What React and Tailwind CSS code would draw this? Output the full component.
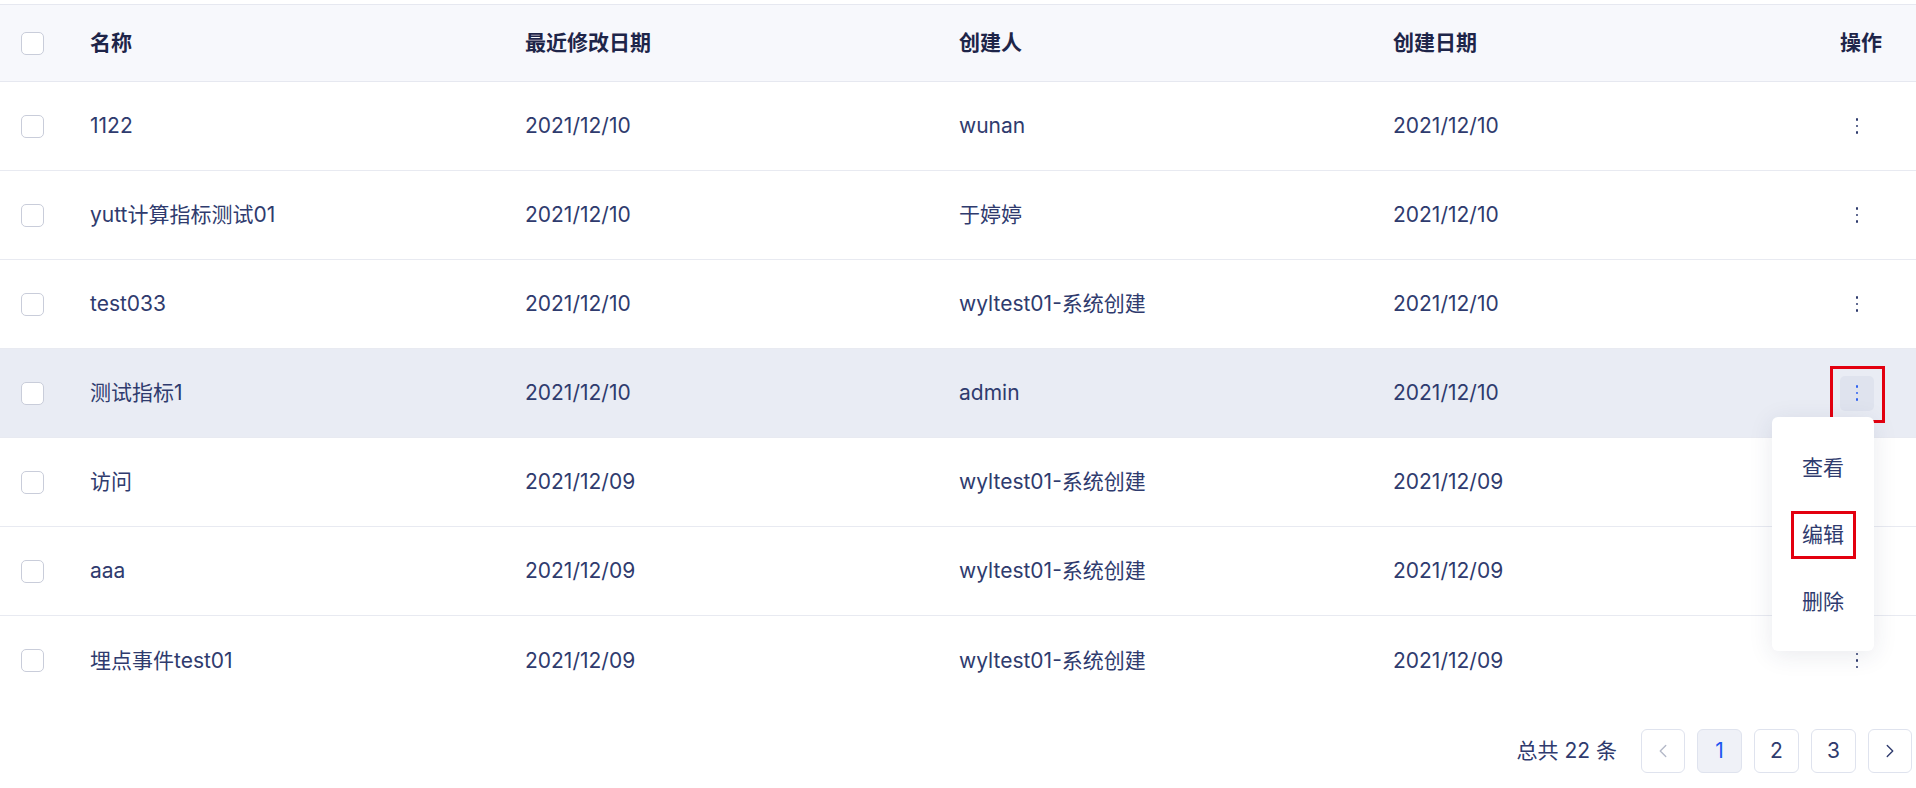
import { ChevronLeft, ChevronRight } from "lucide-react";

const rows = [
  { name: "1122", modified: "2021/12/10", creator: "wunan", created: "2021/12/10" },
  { name: "yutt计算指标测试01", modified: "2021/12/10", creator: "于婷婷", created: "2021/12/10" },
  { name: "test033", modified: "2021/12/10", creator: "wyltest01-系统创建", created: "2021/12/10" },
  { name: "测试指标1", modified: "2021/12/10", creator: "admin", created: "2021/12/10", active: true },
  { name: "访问", modified: "2021/12/09", creator: "wyltest01-系统创建", created: "2021/12/09" },
  { name: "aaa", modified: "2021/12/09", creator: "wyltest01-系统创建", created: "2021/12/09" },
  { name: "埋点事件test01", modified: "2021/12/09", creator: "wyltest01-系统创建", created: "2021/12/09", last: true },
];

const grid = "grid grid-cols-[90px_435px_434px_434px_1fr_120px] items-center";

const Checkbox = () => (
  <span className="block w-[23px] h-[23px] rounded-[5px] border border-[#c9cdda] bg-white ml-[21px]" />
);

const Dots = ({ color = "bg-[#2f3b6e]" }) => (
  <span className="flex flex-col items-center gap-[4px]">
    <span className={`w-[2.5px] h-[2.5px] rounded-full ${color}`} />
    <span className={`w-[2.5px] h-[2.5px] rounded-full ${color}`} />
    <span className={`w-[2.5px] h-[2.5px] rounded-full ${color}`} />
  </span>
);

const ActionMenu = () => (
  <div className="absolute right-0 top-[41px] w-[102px] h-[234px] bg-white rounded-[6px] shadow-[0_4px_24px_rgba(40,50,90,0.10)] pt-[18px] z-10 flex flex-col items-center text-[21px] text-[#2f3b6e]">
    <div className="h-[67px] flex items-center">查看</div>
    <div className="h-[67px] flex items-center">
      <span className="border-[3px] border-[#e3000f] w-[65px] h-[48px] flex items-center justify-center">编辑</span>
    </div>
    <div className="h-[67px] flex items-center">删除</div>
  </div>
);

export default function App() {
  return (
    <div
      className="w-[1916px] h-[788px] bg-white overflow-hidden pt-[4px]"
      style={{ fontFamily: 'Inter, "Noto Sans CJK SC", sans-serif' }}
    >
      {/* header */}
      <div className={`${grid} h-[78px] bg-[#f7f8fc] border-y border-[#e6e8f0] text-[21px] font-bold text-[#1e2549]`}>
        <Checkbox />
        <div>名称</div>
        <div>最近修改日期</div>
        <div>创建人</div>
        <div>创建日期</div>
        <div className="text-right pr-[34px]">操作</div>
      </div>

      {/* rows */}
      {rows.map((r) => (
        <div
          key={r.name}
          className={`${grid} h-[89px] text-[21px] text-[#2f3b6e] ${r.last ? "" : "border-b border-[#e8eaf1]"} ${r.active ? "bg-[#e9ecf4]" : ""}`}
        >
          <Checkbox />
          <div>{r.name}</div>
          <div>{r.modified}</div>
          <div>{r.creator}</div>
          <div>{r.created}</div>
          <div className="flex justify-end pr-[42px]">
            {r.active ? (
              <div className="relative">
                <span className="absolute -left-[10px] -right-[11px] -top-[10px] -bottom-[12px] border-[3px] border-[#e3000f]" />
                <button className="w-[34px] h-[35px] rounded-[5px] bg-[#dfe3ee] flex items-center justify-center">
                  <Dots color="bg-[#2f62f0]" />
                </button>
                <ActionMenu />
              </div>
            ) : (
              <button className="w-[34px] h-[35px] flex items-center justify-center">
                <Dots />
              </button>
            )}
          </div>
        </div>
      ))}

      {/* pagination */}
      <div className="flex items-center justify-end gap-[12px] pr-[4px] mt-[24px] text-[21px] text-[#2f3b6e]">
        <span className="mr-[12px]">总共 22 条</span>
        <button className="w-[44px] h-[44px] rounded-[6px] border border-[#dfe3ee] flex items-center justify-center text-[#b4b9c8]">
          <ChevronLeft size={22} strokeWidth={1.5} />
        </button>
        <button className="w-[45px] h-[44px] rounded-[6px] border border-[#dfe3ee] bg-[#eff1f7] text-[#2056f0] flex items-center justify-center">1</button>
        <button className="w-[45px] h-[44px] rounded-[6px] border border-[#dfe3ee] flex items-center justify-center">2</button>
        <button className="w-[45px] h-[44px] rounded-[6px] border border-[#dfe3ee] flex items-center justify-center">3</button>
        <button className="w-[44px] h-[44px] rounded-[6px] border border-[#dfe3ee] flex items-center justify-center text-[#2f3b6e]">
          <ChevronRight size={22} strokeWidth={1.5} />
        </button>
      </div>
    </div>
  );
}
